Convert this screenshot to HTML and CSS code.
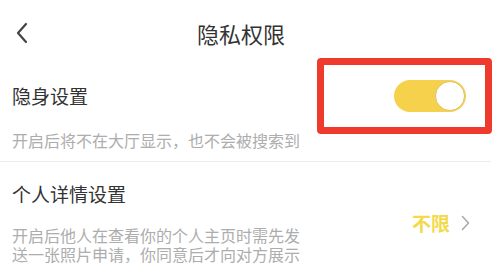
FILE: index.html
```html
<!DOCTYPE html>
<html lang="zh">
<head>
<meta charset="utf-8">
<link rel="stylesheet" href="styles.css">
</head>
<body>
<div class="page">
  <header class="header">
    <svg class="back" width="14" height="22" viewBox="0 0 14 22"><path d="M11 2 L3 11 L11 20" fill="none" stroke="#444" stroke-width="2.2" stroke-linecap="round" stroke-linejoin="round"/></svg>
    <h1 class="title">隐私权限</h1>
  </header>
  <section class="item item-hidden">
    <div class="item-row">
      <span class="item-title">隐身设置</span>
      <span class="toggle"><span class="knob"></span></span>
    </div>
    <p class="desc">开启后将不在大厅显示，也不会被搜索到</p>
  </section>
  <div class="divider"></div>
  <section class="item item-detail">
    <div class="item-main">
      <span class="item-title">个人详情设置</span>
      <p class="desc desc-wrap">开启后他人在查看你的个人主页时需先发送一张照片申请，你同意后才向对方展示</p>
    </div>
    <div class="value">
      <span class="value-text">不限</span>
      <svg class="arrow" width="9" height="16" viewBox="0 0 9 16"><path d="M1.5 1.5 L7.5 8 L1.5 14.5" fill="none" stroke="#ababab" stroke-width="1.6" stroke-linecap="round" stroke-linejoin="round"/></svg>
    </div>
  </section>
  <div class="highlight"></div>
</div>
</body>
</html>
```
FILE: styles.css
```css
* { box-sizing: border-box; }
html, body { margin: 0; padding: 0; background: #fff; }
body {
  font-family: "Noto Sans CJK SC", "Noto Sans", sans-serif;
  width: 499px;
  height: 278px;
  overflow: hidden;
}
.page { position: relative; width: 499px; height: 278px; }
.header {
  height: 66px;
  display: flex;
  align-items: center;
}
.back { margin-left: 15px; flex: none; }
.title {
  margin: 0 0 0 168px;
  font-size: 22px;
  font-weight: 400;
  color: #333;
  line-height: 30px;
}
.item-hidden { padding: 17px 33px 11px 12px; }
.item-row {
  display: flex;
  justify-content: space-between;
  align-items: center;
  height: 26px;
}
.item-title {
  font-size: 19px;
  color: #333;
  line-height: 26px;
}
.toggle {
  width: 72px;
  height: 32px;
  border-radius: 16px;
  background: #f6d24c;
  display: flex;
  align-items: center;
  justify-content: flex-end;
  padding-right: 1px;
}
.knob {
  width: 30px;
  height: 30px;
  border-radius: 50%;
  background: #fff;
  border: 1.5px solid #dcc06a;
}
.desc {
  margin: 21px 0 0;
  font-size: 16px;
  color: #adadad;
  line-height: 20px;
}
.divider { height: 1px; background: #ececec; margin-right: 8px; }
.item-detail {
  display: flex;
  align-items: center;
  justify-content: space-between;
  padding: 19px 29px 0 12px;
}
.item-main { display: flex; flex-direction: column; }
.desc-wrap { width: 292px; margin-top: 19px; line-height: 19px; }
.value { display: flex; align-items: center; gap: 11px; }
.value-text {
  font-size: 19px;
  font-weight: 700;
  color: #f4da48;
  line-height: 26px;
}
.arrow { flex: none; }
.highlight {
  position: absolute;
  left: 317px;
  top: 58px;
  width: 175px;
  height: 76px;
  border: 7px solid #ef3b2d;
  border-radius: 4px;
}
```
